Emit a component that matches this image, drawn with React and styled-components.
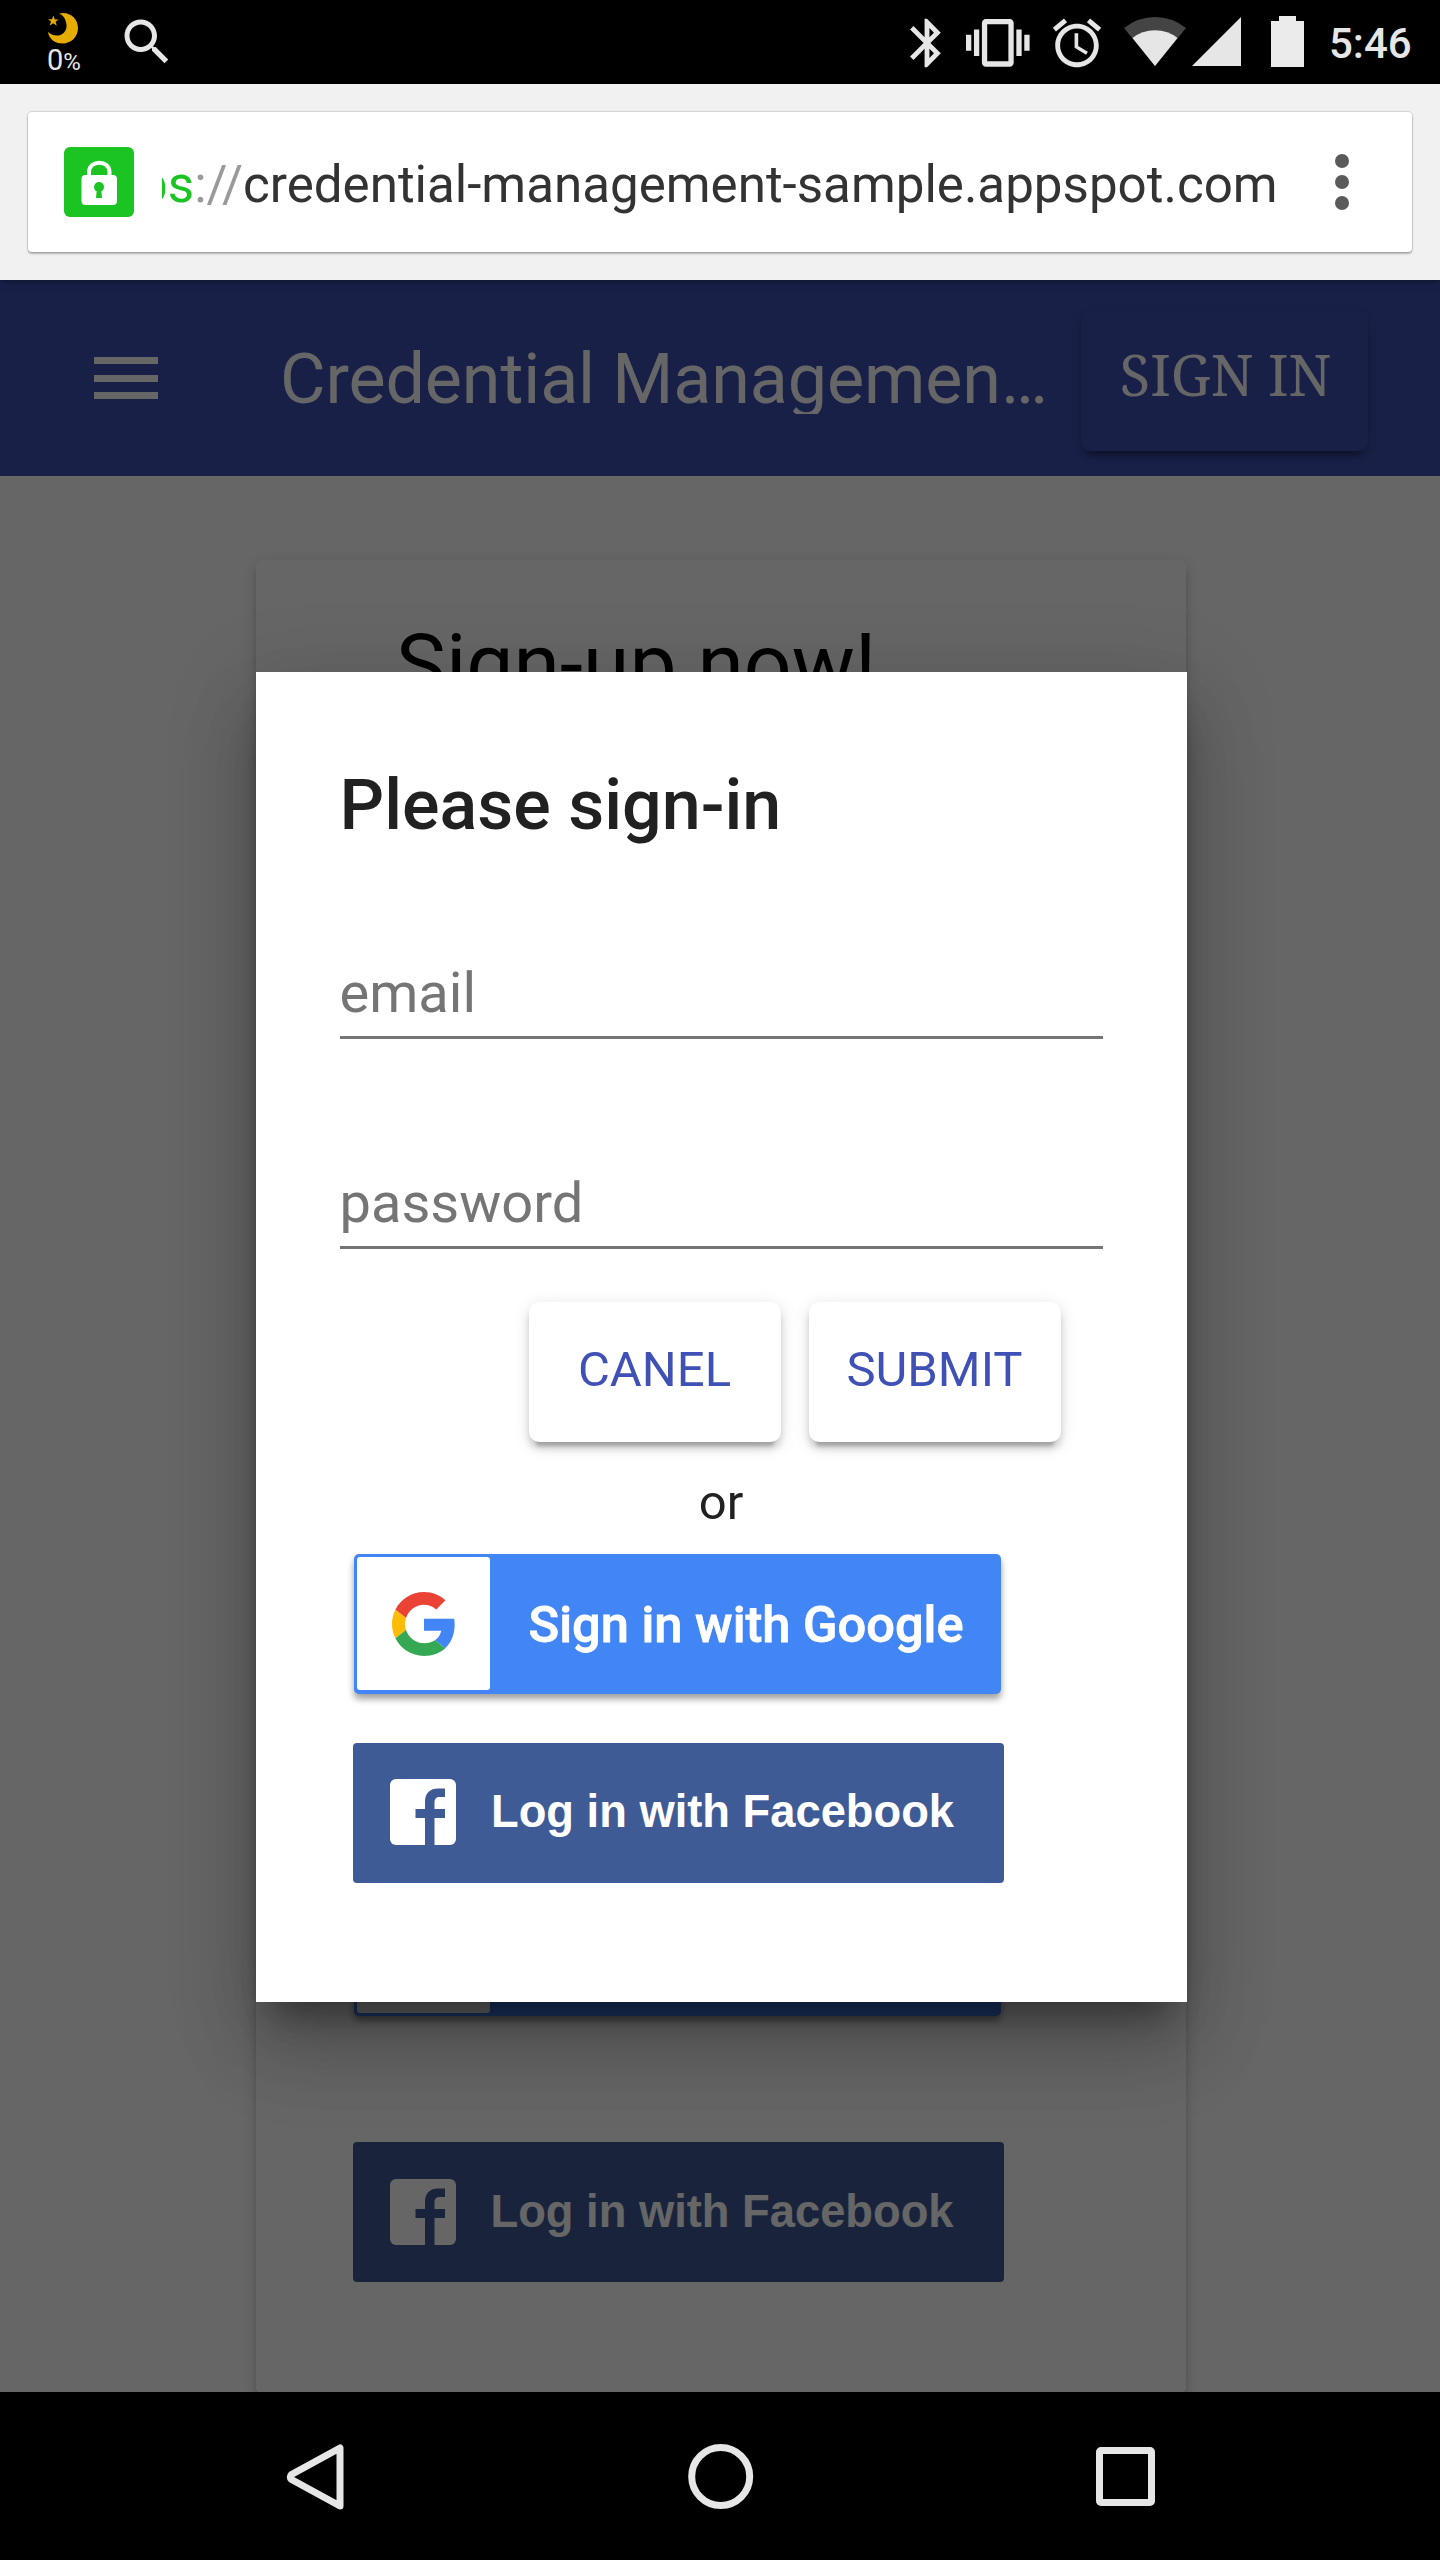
import React from "react";
import styled, { createGlobalStyle } from "styled-components";

const GlobalStyle = createGlobalStyle`
  * { box-sizing: border-box; }
  body { margin: 0; background: #000; }
`;

const Screen = styled.div`
  width: 1440px;
  height: 2560px;
  display: flex;
  flex-direction: column;
  overflow: hidden;
  background: #000;
  font-family: Roboto, "Noto Sans", sans-serif;
`;

/* ---------- Status bar ---------- */

const StatusBar = styled.header`
  flex: none;
  height: 84px;
  display: flex;
  justify-content: space-between;
  padding: 0 27px 0 47px;
  background: #000;
  color: #e6e6e6;
`;

const StatusGroup = styled.div`
  display: flex;
  align-items: flex-start;
`;

const SleepMeter = styled.div`
  width: 37px;
  margin-right: 33px;
  padding-top: 12px;
  display: flex;
  flex-direction: column;
`;

const SleepValue = styled.span`
  font-size: 29px;
  line-height: 30px;
  margin-top: 1px;
  white-space: nowrap;

  small { font-size: 24px; }
`;

const StatusIcon = styled.svg`
  display: block;
  flex: none;
  fill: #e6e6e6;
  margin-left: ${(p) => p.$gap || 0}px;
  margin-top: ${(p) => p.$drop || 0}px;
`;

const Clock = styled.time`
  width: 84px;
  margin-left: 25px;
  font-size: 42px;
  font-weight: 500;
  line-height: 84px;
  padding-top: 2px;
`;

/* ---------- Browser chrome ---------- */

const BrowserBar = styled.div`
  flex: none;
  position: relative;
  z-index: 2;
  height: 196px;
  padding: 28px;
  background: #f1f1f1;
  box-shadow: 0 0 8px rgba(0, 0, 0, 0.5);
`;

const Omnibox = styled.div`
  height: 140px;
  display: flex;
  align-items: center;
  padding: 0 63.5px 0 36px;
  background: #fff;
  border-radius: 4px;
  box-shadow: 0 0 1px 1px rgba(0, 0, 0, 0.13), 0 2px 2px rgba(0, 0, 0, 0.24);
`;

const SecureBadge = styled.div`
  flex: none;
  width: 70px;
  height: 70px;
  border-radius: 6px;
  background: #1bc423;
`;

const Address = styled.div`
  width: 1130px;
  margin-left: 28px;
  display: flex;
  justify-content: flex-start;
  overflow: hidden;
  font-size: 51.1px;
  line-height: 70px;
  padding-top: 6px;
  white-space: nowrap;
  color: #333;
`;

const Url = styled.span`
  margin-left: -84.5px;
`;

const Scheme = styled.span`
  color: #1bc423;
`;

const Slashes = styled.span`
  color: #9a9a9a;
`;

const MenuDots = styled.div`
  margin-left: auto;
  display: flex;
  flex-direction: column;
  gap: 7px;

  i {
    width: 14px;
    height: 14px;
    border-radius: 50%;
    background: #5a5a5a;
  }
`;

/* ---------- Web page ---------- */

const Viewport = styled.main`
  flex: none;
  position: relative;
  height: 2112px;
  overflow: hidden;
  background: #fff;
`;

const AppBar = styled.div`
  height: 196px;
  display: flex;
  align-items: flex-start;
  padding: 31px 72px 0 94px;
  background: #3f51b5;
  color: #fff;
`;

const MenuIcon = styled.div`
  flex: none;
  width: 64px;
  padding-top: 46px;
  display: flex;
  flex-direction: column;
  gap: 10.5px;

  i {
    height: 7px;
    background: #fff;
  }
`;

const AppTitle = styled.div`
  flex: none;
  width: 775px;
  margin: 33px 26px 0 122px;
  overflow: hidden;
  white-space: nowrap;
  text-overflow: ellipsis;
  font-size: 70px;
  line-height: 70px;
  letter-spacing: -0.1px;
`;

const RaisedButton = styled.button`
  flex: none;
  width: 252px;
  height: 140px;
  padding: 0 0 4px;
  border: 0;
  border-radius: 10.5px;
  background: #fff;
  color: #3f51b5;
  font-family: inherit;
  font-size: 49px;
  white-space: nowrap;
  box-shadow: 0 7px 7px rgba(0, 0, 0, 0.14), 0 3.5px 17.5px rgba(0, 0, 0, 0.12),
    0 10.5px 3.5px -7px rgba(0, 0, 0, 0.2);
`;

const AppBarButton = styled(RaisedButton)`
  width: 287px;
  padding: 0 0 15px 2px;
  background: #3f51b5;
  color: #fff;
  font-family: "Noto Serif", "Liberation Serif", serif;
  font-size: 56px;
`;

const SignupCard = styled.section`
  width: 930px;
  height: 1834px;
  margin: 84px 0 0 256px;
  padding: 49px 0 0 83px;
  border-radius: 7px;
  background: #fff;
  box-shadow: 0 7px 7px rgba(0, 0, 0, 0.14), 0 3.5px 17.5px rgba(0, 0, 0, 0.12),
    0 10.5px 3.5px -7px rgba(0, 0, 0, 0.2);
`;

const CardHeading = styled.h1`
  margin: 0 0 0 57px;
  height: 1267px;
  font-size: 84px;
  line-height: 112px;
  font-weight: 400;
  color: #000;
`;

const Backdrop = styled.div`
  position: absolute;
  inset: 0;
  display: flex;
  align-items: center;
  justify-content: center;
  padding: 1px 0 0 2px;
  background: rgba(0, 0, 0, 0.6);
`;

const Dialog = styled.section`
  width: 931px;
  height: 1330px;
  padding: 91px 84px 0;
  display: flex;
  flex-direction: column;
  background: #fff;
  color: #212121;
  box-shadow: 0 50px 72px 5px rgba(0, 0, 0, 0.14), 0 20px 80px 12px rgba(0, 0, 0, 0.12),
    0 28px 35px -17.5px rgba(0, 0, 0, 0.4);
`;

const DialogTitle = styled.h2`
  margin: 0;
  font-size: 70px;
  line-height: 84px;
  font-weight: 500;
`;

const Field = styled.label`
  margin-top: ${(p) => p.$gap}px;
  height: 88px;
  padding-bottom: 1px;
  border-bottom: 3px solid #757575;
  color: #757575;
  font-size: 56px;
  line-height: 84px;
`;

const Actions = styled.div`
  margin: 53px 42px 0 0;
  display: flex;
  justify-content: flex-end;
  gap: 28px;
`;

const Divider = styled.div`
  margin: 26px 0 16px;
  font-size: 49px;
  line-height: 70px;
  text-align: center;
`;

const ProviderButton = styled.div`
  flex: none;
  height: 140px;
  display: flex;
  align-items: center;
  white-space: nowrap;
  color: #fff;
`;

const GoogleButton = styled(ProviderButton)`
  width: 647px;
  margin-left: 14.5px;
  padding-left: 3px;
  border-radius: 5px;
  background: #4285f4;
  box-shadow: 0 5px 7px rgba(0, 0, 0, 0.38);
  font-size: 50.6px;
  font-weight: 500;
  -webkit-text-stroke: 0.8px #fff;
`;

const GoogleLabel = styled.span`
  padding-top: 1px;
`;

const GoogleTile = styled.span`
  width: 133px;
  height: 133px;
  margin-right: 38.5px;
  display: flex;
  align-items: center;
  justify-content: center;
  border-radius: 3px;
  background: #fff;
`;

const FacebookButton = styled(ProviderButton)`
  width: 651px;
  margin: ${(p) => p.$gap}px 0 0 13.5px;
  padding-left: 37px;
  border-radius: 4px;
  background: #3f5b96;
  font-family: "Liberation Sans", Arial, sans-serif;
  font-size: 45.3px;
  font-weight: 700;
`;

const FacebookMark = styled.svg`
  margin-top: -1px;
`;

const FacebookLabel = styled.span`
  margin-left: 35px;
  padding-bottom: 1px;
`;

/* ---------- Navigation bar ---------- */

const NavBar = styled.nav`
  flex: 1;
  display: flex;
  align-items: center;
  padding: 1px 281px 0 284px;
  justify-content: space-between;
  background: #000;

  svg { fill: none; stroke: #e6e6e6; stroke-width: 7; }
`;

const GoogleLogo = () => (
  <svg width="64" height="64" viewBox="0 0 48 48">
    <path fill="#EA4335" d="M24 9.5c3.54 0 6.71 1.22 9.21 3.6l6.85-6.85C35.9 2.38 30.47 0 24 0 14.62 0 6.51 5.38 2.56 13.22l7.98 6.19C12.43 13.72 17.74 9.5 24 9.5z" />
    <path fill="#4285F4" d="M46.98 24.55c0-1.57-.15-3.09-.38-4.55H24v9.02h12.94c-.58 2.96-2.26 5.48-4.78 7.18l7.73 6c4.51-4.18 7.09-10.36 7.09-17.65z" />
    <path fill="#FBBC05" d="M10.53 28.59c-.48-1.45-.76-2.99-.76-4.59s.27-3.14.76-4.59l-7.98-6.19C.92 16.46 0 20.12 0 24s.92 7.54 2.56 10.78l7.97-6.19z" />
    <path fill="#34A853" d="M24 48c6.48 0 11.93-2.13 15.89-5.81l-7.73-6c-2.15 1.45-4.92 2.3-8.16 2.3-6.26 0-11.57-4.22-13.47-9.91l-7.98 6.19C6.51 42.62 14.62 48 24 48z" />
  </svg>
);

const SignInWithGoogle = () => (
  <GoogleButton>
    <GoogleTile><GoogleLogo /></GoogleTile>
    <GoogleLabel>Sign in with Google</GoogleLabel>
  </GoogleButton>
);

const LogInWithFacebook = ({ gap }) => (
  <FacebookButton $gap={gap}>
    <FacebookMark width="66" height="66" viewBox="0 0 66 66">
      <rect width="66" height="66" rx="6" fill="#fff" />
      <path fill="#3f5b96" d="M35 66V39H25.500V30H35V23C35 14 40 9.500 48 9.500H55V18H50C46 18 44.500 20 44.500 23.500V30H55V39H44.500V66Z" />
    </FacebookMark>
    <FacebookLabel>Log in with Facebook</FacebookLabel>
  </FacebookButton>
);

export default function App() {
  return (
    <Screen>
      <GlobalStyle />
      <StatusBar>
        <StatusGroup>
          <SleepMeter>
            <svg width="33" height="32" viewBox="0 0 33 32">
              <path fill="#e6ac00" d="M12 1.500C22-1 31 6 31 16C31 25 24 31.500 15.500 31.500C8 31.500 2 27 1 20C9 27 20 23 19.500 13C19 7 16 3 12 1.500Z" />
              <path fill="#e6ac00" d="M6.500 3.500L7.800 7.500H11.500L8.600 9.700L9.800 13.800L6.200 11.300L2.800 13.500L4 9.500L1 7.200L4.900 7.300Z" />
            </svg>
            <SleepValue>0<small>%</small></SleepValue>
          </SleepMeter>
          <StatusIcon width="60" height="60" viewBox="0 0 24 24" $drop={11.5}>
            <path d="M15.500 14h-.79l-.28-.27C15.410 12.590 16 11.110 16 9.500 16 5.910 13.090 3 9.500 3S3 5.910 3 9.500 5.910 16 9.500 16c1.610 0 3.090-.59 4.230-1.570l.27.28v.79l5 4.990L20.490 19l-4.990-5zm-6 0C7.010 14 5 11.990 5 9.500S7.010 5 9.500 5 14 7.010 14 9.500 11.990 14 9.500 14z" />
          </StatusIcon>
        </StatusGroup>
        <StatusGroup>
          <StatusIcon width="58" height="58" viewBox="0 0 24 24" $drop={13.5}>
            <path d="M17.710 7.710L12 2h-1v7.590L6.410 5 5 6.410 10.590 12 5 17.590 6.410 19 11 14.410V22h1l5.710-5.710-4.300-4.290 4.300-4.290zM13 5.830l1.880 1.880L13 9.590V5.830zm1.880 10.460L13 18.170v-3.760l1.880 1.880z" />
          </StatusIcon>
          <StatusIcon width="63.600" height="63.600" viewBox="0 0 24 24" $drop={11} $gap={10.5}>
            <path d="M0 15h2V9H0v6zm3 2h2V7H3v10zm19-8v6h2V9h-2zm-3 8h2V7h-2v10zM16.500 3h-9C6.670 3 6 3.670 6 4.500v15c0 .83.67 1.500 1.500 1.500h9c.83 0 1.500-.67 1.500-1.500v-15c0-.83-.67-1.500-1.500-1.500zM16 19H8V5h8v14z" />
          </StatusIcon>
          <StatusIcon width="58" height="58" viewBox="0 0 24 24" $drop={13.5} $gap={18}>
            <path d="M22 5.720l-4.600-3.860-1.290 1.530 4.600 3.860L22 5.720zM7.880 3.390L6.600 1.860 2 5.710l1.290 1.530 4.590-3.850zM12.500 8H11v6l4.750 2.850.75-1.230-4-2.370V8zM12 4c-4.970 0-9 4.030-9 9s4.020 9 9 9c4.970 0 9-4.030 9-9s-4.030-9-9-9zm0 16c-3.870 0-7-3.130-7-7s3.130-7 7-7 7 3.130 7 7-3.130 7-7 7z" />
          </StatusIcon>
          <StatusIcon width="62" height="50" viewBox="0 0 62 50" $drop={17} $gap={18}>
            <path fill="#444" d="M31 49L0 11Q14 0 31 0T62 11Z" />
            <path d="M31 49L8.500 21Q18 13.200 31 13.200T53.500 21Z" />
          </StatusIcon>
          <StatusIcon width="49" height="49" viewBox="0 0 49 49" $drop={17} $gap={6}>
            <path d="M49 0V49H0Z" />
          </StatusIcon>
          <StatusIcon width="33" height="51" viewBox="0 0 33 51" $drop={16} $gap={30}>
            <path fill="#ebebeb" d="M8 0H25V5H33V51H0V5H8Z" />
          </StatusIcon>
          <Clock>5:46</Clock>
        </StatusGroup>
      </StatusBar>

      <BrowserBar>
        <Omnibox>
          <SecureBadge>
            <svg width="70" height="70" viewBox="0 0 70 70">
              <path d="M25 31V25C25 12.500 45.500 12.500 45.500 25V31" fill="none" stroke="#fff" strokeWidth="4" />
              <rect x="17.500" y="28" width="35.500" height="30" rx="4" fill="#fff" />
              <circle cx="35" cy="40" r="5" fill="#1bc423" />
              <path d="M33 41H37L38 51H32Z" fill="#1bc423" />
            </svg>
          </SecureBadge>
          <Address>
            <Url>
              <Scheme>https</Scheme>
              <Slashes>://</Slashes>
              credential-management-sample.appspot.com
            </Url>
          </Address>
          <MenuDots><i /><i /><i /></MenuDots>
        </Omnibox>
      </BrowserBar>

      <Viewport>
        <AppBar>
          <MenuIcon><i /><i /><i /></MenuIcon>
          <AppTitle>Credential Managemen…</AppTitle>
          <AppBarButton>SIGN IN</AppBarButton>
        </AppBar>
        <SignupCard>
          <CardHeading>Sign-up now!</CardHeading>
          <SignInWithGoogle />
          <LogInWithFacebook gap={126} />
        </SignupCard>

        <Backdrop>
          <Dialog>
            <DialogTitle>Please sign-in</DialogTitle>
            <Field $gap={104}>email</Field>
            <Field $gap={122}>password</Field>
            <Actions>
              <RaisedButton>CANEL</RaisedButton>
              <RaisedButton>SUBMIT</RaisedButton>
            </Actions>
            <Divider>or</Divider>
            <SignInWithGoogle />
            <LogInWithFacebook gap={49} />
          </Dialog>
        </Backdrop>
      </Viewport>

      <NavBar>
        <svg width="66" height="72" viewBox="0 0 66 72">
          <path d="M56 7V65L7.500 38.500Q5 36 7.500 33.500Z" strokeLinejoin="round" />
        </svg>
        <svg width="72" height="72" viewBox="0 0 72 72">
          <circle cx="34.700" cy="35.500" r="29" />
        </svg>
        <svg width="66" height="66" viewBox="0 0 66 66">
          <rect x="6.500" y="6.500" width="52" height="52" rx="1.500" />
        </svg>
      </NavBar>
    </Screen>
  );
}
